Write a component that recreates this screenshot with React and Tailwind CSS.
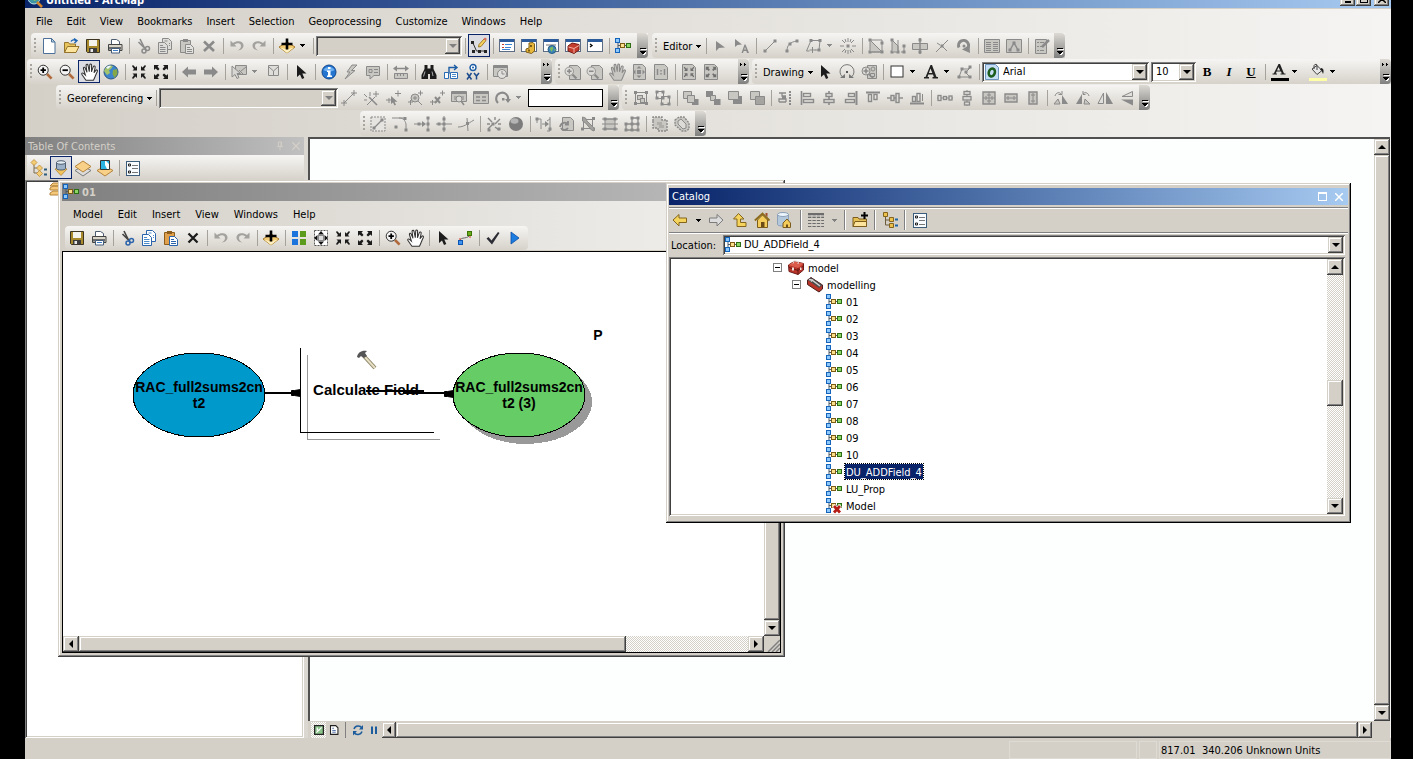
import React from 'react';

const G = '#8a8a8a';
const L = '#c9c7c2';

const S = ({ d, c = G, w = 1, f = 'none' }) => <path d={d} stroke={c} strokeWidth={w} fill={f} />;
const F = ({ d, c = G }) => <path d={d} fill={c} />;

const node = (
  <>
    <S d="M3 3v10M3 7.500h10" c="#4a5a6a" />
    <rect x="0.5" y="0.5" width="4" height="4" fill="#8cc8fc" stroke="#1464bc" />
    <rect x="0.5" y="10.5" width="4" height="4" fill="#8cc8fc" stroke="#1464bc" />
    <rect x="5.5" y="5.5" width="4" height="4" fill="#fce08c" stroke="#7c5c14" />
    <rect x="11.5" y="5.5" width="4" height="4" fill="#8cd464" stroke="#2c6c14" />
  </>
);
const hand = (
  <path
    transform="translate(-.8 -1) scale(1.150)"
    d="M5 15L1.500 10C.8 9 2 8.200 2.900 9L4.500 10.500L2.800 4.800C2.500 3.600 3.900 3.200 4.300 4.300L5.900 8L5.100 2.200C5 1 6.600.8 6.800 2L7.900 7.500L8.300 1.600C8.400.5 9.900.6 9.900 1.700L9.800 7.600L11.400 3.200C11.900 2.100 13.300 2.600 13 3.800L12 8.500L13.600 6.400C14.400 5.500 15.400 6.300 14.900 7.300C13.500 10 12.800 12.800 11.500 15Z"
    strokeWidth=".9"
  />
);
const lens = (sign, c1 = '#333', c2 = '#b06a3c', bg = '#f4f4f4') => (
  <>
    <S d="M10 10l4.6 4.6" c={c2} w={2.6} />
    <circle cx="6.2" cy="6.2" r="5" fill={bg} stroke={c1} />
    <S d={sign ? 'M3.5 6.2h5.4M6.2 3.5v5.4' : 'M3.5 6.2h5.4'} c={c1 === G ? G : '#000'} w={1.8} />
  </>
);
const shrink = (c) => (
  <F c={c} d="M1 2l1-1 2.5 2.5L6 2v4.5H1.5L3 5zM15 2l-1-1-2.5 2.5L10 2v4.5h4.5L13 5zM1 14l1 1 2.5-2.5L6 14V9.5H1.5L3 11zM15 14l-1 1-2.5-2.5L10 14V9.5h4.5L13 11z" />
);
const grow = (c) => (
  <F c={c} d="M1 1h5L4.500 2.500 6.500 5 5 6.500 2.500 4.500 1 6zM15 1h-5l1.500 1.500-2 2.500L11 6.500l2.500-2L15 6zM1 15h5l-1.500-1.500 2-2.500L5 9.500l-2.500 2L1 10zM15 15h-5l1.500-1.500-2-2.500L11 9.500l2.500 2L15 10z" />
);
const pointer = (c) => <F c={c} d="M4 1v12l3-2.600 2 4.600 2.300-1-2-4.500H13.500z" />;
const floppy = (
  <>
    <path d="M1.500 1.500h13v13h-12l-1-1z" fill="#a88a2c" stroke="#3c3420" />
    <rect x="4" y="2" width="8" height="6" fill="#f4f4ec" />
    <rect x="4" y="10" width="8" height="4.500" fill="#3c3c3c" />
    <rect x="5.500" y="11" width="2.500" height="3" fill="#e8e8e8" />
  </>
);
const printer = (
  <>
    <path d="M4.500 6.500v-5h5l3 2v3" fill="#fff" stroke="#4c5c70" />
    <path d="M1.500 6.500h13.500v6h-13.500z" fill="#d8d4c8" stroke="#444" />
    <path d="M2 9h12v2.500H2z" fill="#6c6c6c" />
    <path d="M4.500 10.500h8v4.500h-8z" fill="#fff" stroke="#445c7c" />
    <S d="M6 12.500h5" c="#3c7cc4" />
  </>
);
const scissors = (c, c2) => (
  <>
    <S d="M5 1l4.500 9M3.500 4L10 10.500" c={c2} w={1.600} />
    <circle cx="9" cy="13" r="2" fill="none" stroke={c} strokeWidth="1.500" />
    <circle cx="12.500" cy="10.500" r="2" fill="none" stroke={c} strokeWidth="1.500" />
  </>
);
const copyIcon = (c, bg, l) => (
  <>
    <path d="M5.500.5h6l3 3v8h-9z" fill={bg} stroke={c} />
    <path d="M1.500 4.500h6l3 3v8h-9z" fill={bg} stroke={c} />
    <S d="M3 7.500h3M3 9.500h5.500M3 11.500h5.500M3 13.500h5.500M7.500 3h3M12 5.500h1M12 7.500h1" c={l} />
  </>
);
const pasteIcon = (c, bg, l, b) => (
  <>
    <path d="M1.500 2.500h10v12h-10z" fill={b} stroke={c} />
    <path d="M4 1h5v3H4z" fill={c} />
    <path d="M6.500 6.500h5l3 3v6h-8z" fill={bg} stroke={l} />
    <S d="M8 9.500h3M8 11.500h5M8 13.500h5" c={l} />
  </>
);
const addData = (
  <>
    <path d="M8 4l8 5-8 6-8-6z" fill="#f4cc74" stroke="#a87c2c" />
    <path d="M1 9.500l7 2 7-2-7 5.500z" fill="#fff0c0" />
    <S d="M8 .5v11M2.500 6h11" c="#000" w={2.600} />
  </>
);
const win = (c = '#2c5c9c') => (
  <>
    <rect x="0.500" y="1.500" width="15" height="12" fill="#fff" stroke="#5c6c84" />
    <rect x="1" y="1" width="14" height="3" fill={c} />
  </>
);
const vtx = (pts, c = G) => pts.map(([x, y], i) => <rect key={i} x={x - 1.5} y={y - 1.5} width="3" height="3" fill={c} />);
const undo = <F c="#a4a29e" d="M1.500 2.500v6h6L5.500 6.500C8.500 4.500 12 5 12 8c0 2-1.500 3.500-3.500 4.500 4-.300 6-2.500 6-5 0-4.500-6.500-5.500-10.500-2.500z" />;
const redo = <F c="#a4a29e" d="M14.500 2.500v6h-6l2-2C7.500 4.500 4 5 4 8c0 2 1.500 3.500 3.500 4.500-4-.300-6-2.500-6-5 0-4.500 6.500-5.500 10.500-2.500z" />;
const list = (
  <>
    <rect x="1.500" y="1.500" width="13" height="14" fill="#f8fbff" stroke="#3c5c7c" />
    <S d="M7 5.500h6M7 8.500h6M7 12.500h6" c="#777" />
    <S d="M3.500 4h2v2h-2zM3.500 11h2v2h-2z" c="#222" />
  </>
);
const toolbox = (
  <>
    <path d="M.5 5L6 1.500l9.500 2V10L10 14.500 1 11.500z" fill="#b83428" stroke="#6c1c18" />
    <path d="M.5 5L10 8l5.500-4.500L6 1.500z" fill="#dc5c4c" />
    <S d="M10 8v6.500M1 7.500l9 3L15.500 6" c="#641812" />
    <path d="M5 3.500L6 .8l4.500.7-.5 2.500" fill="none" stroke="#e8d8d4" />
    <path d="M4 7.500h2v3H4zM12 7.500h1.500v2.500H12z" fill="#f0e0dc" />
  </>
);
const page = (extra) => (
  <>
    <path d="M4.500 1.500h8l3 3v11h-11z" fill={L} stroke={G} />
    {extra}
  </>
);

const icons = {
  node,
  floppy,
  printer,
  undo,
  redo,
  list,
  toolbox,
  addData,
  newDoc: (
    <>
      <path d="M2.500.5h8l3.500 3.500v11.500H2.500z" fill="#fff" stroke="#4c7098" />
      <path d="M10.500.5V4H14z" fill="#bcd4ec" stroke="#4c7098" />
    </>
  ),
  open: (
    <>
      <path d="M1.500 14.500v-10h4l1 1.500h6v8.500z" fill="#e8c45c" stroke="#94742c" />
      <path d="M1.500 14.500l3-6H16l-3 6z" fill="#fce49c" stroke="#94742c" />
      <S d="M8 3.500C9 1.500 11 1.500 13 2.500M11 .500l3 2-2.500 2.500" c="#1c64b4" w={1.400} />
    </>
  ),
  cutG: scissors(G, G),
  cut: scissors('#2c64ac', '#444'),
  copyG: copyIcon(G, '#dedcd8', G),
  copy: copyIcon('#2c64ac', '#fff', '#4c8ccc'),
  pasteG: pasteIcon(G, '#e4e2de', G, L),
  paste: pasteIcon('#8c5c1c', '#fff', '#2c64ac', '#e0a04c'),
  delG: <S d="M3 3.500l10 9.500M13 3.500L3 13" w={2.600} />,
  del: <S d="M3.500 3.500l9 9M12.500 3.500l-9 9" c="#1c1c1c" w={2.300} />,
  edit: (
    <>
      <S d="M1.500 4l4 9h9" c="#333" />
      <F c="#222" d="M0 3h3v3H0zM1 12h3v3H1zM7 12h3v3H7zM13 12h3v3h-3z" />
      <path d="M7.500 9l.5-2.500 5-5.500 2 1.500-5 6z" fill="#f4d45c" stroke="#a47c2c" />
      <path d="M12.500 1L14-.5l2 1.500-1.500 1.500z" fill="#dc6c5c" />
    </>
  ),
  winToc: (
    <>
      {win()}
      <S d="M3 6.500h2M3 9.500h2" c="#c43c2c" />
      <S d="M6 6.500h7M6 9.500h6M3 11.500h8" c="#3c84d4" />
    </>
  ),
  winCatalog: (
    <>
      {win()}
      <path d="M8 7.500V5l4-.5 1.500 1.500v7l-3 2.500-5.500-1.500v-3l3-1z" fill="#e8b83c" stroke="#7c5c14" />
      <path d="M9 7h2v2H9zM7 11.500h2v2H7z" fill="#7c5c14" />
    </>
  ),
  winSearch: (
    <>
      {win()}
      <path d="M3 6h10v2H3z" fill="#b8b8b8" />
      <circle cx="9" cy="11.500" r="4" fill="#3c84bc" stroke="#285c84" />
      <F c="#7cbc5c" d="M6.500 10l3-1.500 1 2-2 3.500zM11 11l2 .500-1 2z" />
    </>
  ),
  winTool: (
    <>
      {win()}
      <path d="M3 8l4-3 7 1.500V12l-5 3.500L3 13z" fill="#c43c2c" stroke="#741c14" />
      <S d="M3.500 9l5.500 1.500 5-3M9 10.500V15" c="#f0b0a4" />
    </>
  ),
  winPy: (
    <>
      {win()}
      <S d="M3 6l2 1.500L3 9" c="#000" w={1.300} />
    </>
  ),
  zoomIn: lens(true),
  zoomOut: lens(false),
  pan: <g fill="#fff" stroke="#333">{hand}</g>,
  panG: <g fill={L} stroke={G}>{hand}</g>,
  globe: (
    <>
      <circle cx="8" cy="8" r="7" fill="#3c84cc" stroke="#2c5484" />
      <path d="M2 5c2-4 6-4 8-3L8 5 6 6 7 9l-3 2-3-4z" fill="#a4c46c" />
      <path d="M10 6l4-1 .5 5-3 4-2-4z" fill="#84a848" />
      <path d="M3 3.500C5 1.500 7 1.500 8 2L5 5z" fill="#f0f8ff" />
    </>
  ),
  shrink: shrink('#1c1c1c'),
  grow: grow('#1c1c1c'),
  back: <F d="M1 8l6-5.500V5.500h8v5H7v3z" />,
  fwd: <F d="M15 8L9 2.500V5.500H1v5h8v3z" />,
  selFeat: (
    <>
      <path d="M4.500 1.500h11v9h-11z" fill={L} stroke={G} />
      <S d="M8 6l4 4M15 3l-5 4" />
      <path d="M1 2v11l3-2.500 2 4 2-1-2-4h3.500z" fill="#d8d6d2" stroke={G} />
    </>
  ),
  clearSel: (
    <>
      <path d="M3.500 1.500h10v10h-10z" fill="#e0deda" stroke={G} />
      <S d="M4 3l4.500 4M13 3L8.500 7v4" />
    </>
  ),
  pointer: pointer('#1c1c1c'),
  pointerG: <F d="M4 3v10l3-3 6-.500z" />,
  pointerA: (
    <>
      <F d="M1 1v8l2.500-2L8 6.500z" />
      <path d="M11.500 6.500l3.500 8.500h-2l-.7-2h-2.600l-.7 2H7.500l3-8.500zM11 9l-.8 2.500h1.700z" fill={G} />
    </>
  ),
  info: (
    <>
      <circle cx="8" cy="8" r="7" fill="#2474d0" stroke="#14488c" />
      <path d="M2.500 6c2-4 9-4 11 0-4 2-7 2-11 0z" fill="#6cb0f0" />
      <F c="#fff" d="M7 3h2.500v2H7zM6 6.500h3.500v5H11v1.500H6v-1.500h1V8H6z" />
    </>
  ),
  bolt: <path d="M9 1L4 8h3l-5 7 10-8.500H8.500L14 1z" fill={L} stroke={G} />,
  popup: (
    <>
      <path d="M1.500 2.500h13v9H9l-4 3.500v-3.500H1.500z" fill={L} stroke={G} />
      <S d="M4 5.500h3v3H4zM9 5.500h4M9 8.500h4" />
    </>
  ),
  measure: (
    <>
      <S d="M2 4.500h12" w={1.500} />
      <F d="M0 4.500L4 1.500v6zM16 4.500l-4-3v6z" />
      <path d="M1.500 9.500h13v5h-13z" fill={L} stroke={G} />
      <S d="M4.500 10v2M7.500 10v2M10.500 10v2" />
    </>
  ),
  find: (
    <>
      <path d="M3.500 1h3v3.500h3V1h3v4l3 6v4H9v-5H7v5H.500v-4l3-6z" fill="#1c1c1c" />
      <S d="M4 7.500l-1.500 5M11 7.500l1 4.500" c="#aaa" />
    </>
  ),
  route: (
    <>
      <S d="M2 13V9h4V3.500h7M11 1l3 2.500L11 6" c="#1c5ca4" w={1.400} />
      <path d="M1.500 8.500h4v6h-4zM7.500 8.500h7v6h-7z" fill="#fff" stroke="#2c6cb4" />
      <S d="M9 10.500h4M9 12.500h4" c="#4c8ccc" />
    </>
  ),
  goXY: (
    <>
      <circle cx="8" cy="3.500" r="3" fill="#fff" stroke="#1c5ca4" strokeWidth="1.400" />
      <circle cx="8" cy="3.500" r="1" fill="#1c5ca4" />
      <S d="M2 9l4.500 6.500M6.500 9L2 15.500M9 9l2.500 3L14 9M11.500 12v3.500" c="#1c4c8c" w={1.500} />
    </>
  ),
  time: (
    <>
      <path d="M.5 1.500h14v11H.5z" fill={L} stroke={G} />
      <F d="M1 2h13v2H1z" />
      <circle cx="9" cy="10" r="4.500" fill="#e2e0dc" stroke={G} />
      <S d="M9 7v3h2.500" />
    </>
  ),
  lzoomIn: page(<g transform="translate(-1 2) scale(.85)">{lens(true, G, G, '#dddbd7')}</g>),
  lzoomOut: page(<g transform="translate(-1 2) scale(.85)">{lens(false, G, G, '#dddbd7')}</g>),
  lfull: (
    <>
      <path d="M2.500.5h9l3 3v12h-12z" fill={L} stroke={G} />
      <F d="M8 2L5.500 4.500h5zM8 14l-2.500-2.500h5zM2 8l2.500-2.500v5zM14 8l-2.500-2.500v5z" />
      <rect x="6" y="6" width="4" height="4" fill={G} />
    </>
  ),
  l11: (
    <>
      <path d="M1.500.5h10l3 3v12h-13z" fill={L} stroke={G} />
      <S d="M4.500 5v6M11.500 5v6M8 6v1.500M8 9v1.500" w={1.500} />
    </>
  ),
  lshrink: (
    <>
      <path d="M1.500.5h10l3 3v12h-13z" fill={L} stroke={G} />
      <g transform="translate(2 2) scale(.75)">{shrink('#6e6e6e')}</g>
    </>
  ),
  lgrow: (
    <>
      <path d="M1.500.5h10l3 3v12h-13z" fill={L} stroke={G} />
      <g transform="translate(2 2) scale(.75)">{grow('#6e6e6e')}</g>
    </>
  ),
  line: <>{vtx([[3, 13], [13, 3]])}<S d="M3 13L13 3" /></>,
  arc: <>{vtx([[3, 13], [6, 6], [13, 3]])}<S d="M3 13C3 7 6 4 13 3" /></>,
  trace: <>{vtx([[5, 2.5], [14, 2.5], [13, 12]])}<S d="M.5 13L5 2.500h9L13 12H9M6.500 9v6M3.500 12h6M.5 13h3" /></>,
  point: (
    <>
      <path d="M8 0v4M8 12v4M0 8h4M12 8h4M2 2l3 3M14 2l-3 3M2 14l3-3M14 14l-3-3M5 1l1 3M11 1l-1 3M5 15l1-3M11 15l-1-3" stroke={G} />
      <rect x="6.500" y="6.500" width="3" height="3" fill={G} />
    </>
  ),
  reshapeA: <>{vtx([[2, 2], [2, 14], [14, 14], [14, 5]])}<path d="M2 14V2l12 12z" fill={L} stroke={G} /><S d="M2 2h12v3" /><S d="M14 5v9H2" /></>,
  reshapeB: <>{vtx([[2, 2], [2, 14], [8, 14], [14, 8], [14, 14]])}<S d="M2 14V2l6 6v6z" f={L} /><S d="M8 2v12M14 8v6h-3" /></>,
  split: <><path d="M.5 5.500h15v6H.5z" fill={L} stroke={G} /><S d="M8 0v16" w={1.500} />{vtx([[8, 2], [8, 14]])}</>,
  cross: <><S d="M2 14L14 2M3 5l3 2M9 9l4 4" />{vtx([[8, 8]])}</>,
  rotate: <><S d="M3 9.500A5 5 0 1 1 11 11" w={3} /><F d="M6 11.500l8 3.500-.5-8z" /><circle cx="8" cy="8" r="1.500" fill={G} /></>,
  attrs: <><path d="M.5 1.500h15v13H.5z" fill={L} stroke={G} /><S d="M2 4.500h5M9 4.500h5M2 6.500h5M9 6.500h5M2 8.500h5M9 8.500h5M2 10.500h5M9 10.500h5M2 12.500h5M9 12.500h5" /></>,
  sketchP: <><path d="M.5 1.500h15v13H.5z" fill={L} stroke={G} /><S d="M4 12l4-7 4 7" w={1.400} />{vtx([[4, 12], [8, 5], [12, 12]])}</>,
  create: <><path d="M1.500 1.500h11v14h-11z" fill={L} stroke={G} /><S d="M3 4.500h2M6 4.500h4M3 8.500h2M6 8.500h4M3 12.500h2M6 12.500h4" /><S d="M8 9l7-7" w={2.500} /></>,
  rotArc: <><S d="M3.500 13A7 7 0 1 1 12.500 13" c="#777" /><F c="#777" d="M1 14h5v-4zM15 14h-5v-4z" /><rect x="7" y="7" width="2" height="2" fill="#555" /></>,
  zoomSel: <><path d="M6.500 1.500h9v13h-9z" fill={L} stroke={G} /><circle cx="12" cy="5" r="2" fill="none" stroke={G} /><path d="M9.500 9.500h4v3h-4z" fill="none" stroke={G} /><circle cx="5" cy="7" r="4" fill="#dcdad6" stroke={G} /><S d="M2.500 7h5M5 4.500v5M7.500 10l5 4.500" w={1.600} /></>,
  rect: <rect x="2" y="2" width="12" height="11" fill="#fff" stroke="#333" />,
  bigA: <path d="M7.500 1h1.500l4.500 12h1.500v1.500H9.500V13h1.300l-.8-2.500H5.300L4.500 13H6v1.500H1V13h1.500zM7.500 4.500L5.900 9h3.400z" fill="#222" />,
  fontA: <path d="M7.500 0h1.500l4 9.500h1.500v1H9.500v-1h1.300l-.8-2H5.600l-.8 2H6v1H1.500v-1h1.300zM7.500 3L6 6.500h3.200z" fill="#222" />,
  bucket: <><path d="M3 5l5-3.500 5 5-5 4z" fill="#e8e8e8" stroke="#444" /><S d="M8 6V1c0-1-3-1-3 1v3" c="#444" /><F c="#222" d="M12 4c3 0 3 4 2 6-1-2-1-4-3-4z" /></>,
  editVert: <><S d="M2 13l3-8h6l3-2.500M2 13h11L8.500 8.500 13 4" />{vtx([[2, 13], [5, 5], [13, 3], [13, 13], [9, 8]])}</>,
  gcp: <><S d="M3 13L13 3M0 13h6M3 10v6M10 3h6M13 0v6" /></>,
  gcpWand: <><S d="M1 4l3 3M7 2v4M1 10h3M4 15l8-8M10 4h6M13 1v6M11 12l3 3" /><S d="M6 7l8 8" w={1.600} /></>,
  gcpSel: <><F d="M6 6v8l2-1.500 1.500 3 1.500-.7-1.500-3h3z" /><S d="M10 3.500h6M13 .500v6M1 10h6M4 8v5" /></>,
  gcpZoom: <><circle cx="8" cy="8" r="4" fill={L} stroke={G} /><S d="M6 8h4M8 6v4M11 11l4 4M11 3h5M13.500.500v5M1 12h5M3.500 10v5" /></>,
  gcpDel: <><S d="M11 3h5M13.500.500v5M1 12h5M3.500 10v5" /><S d="M6 7l5 6M11 7l-5 6" w={2} /></>,
  linkTbl: <><path d="M.5 1.500h15v10H.5z" fill={L} stroke={G} /><F d="M1 2h14v2H1z" /><S d="M3 7h3M10 7h3M3 9h2M11 9h2" /><circle cx="8" cy="9" r="3" fill="#dddbd7" stroke={G} /><S d="M10 11l3 4" w={1.600} /></>,
  tbl: <><path d="M.5 1.500h15v12H.5z" fill={L} stroke={G} /><F d="M1 2h14v2H1z" /><S d="M3 7h4M9 7h4M3 10.500h4M9 10.500h4" w={1.500} /></>,
  rotTool: <><S d="M3 13A6 6 0 1 1 13 10" w={2} /><F d="M10 9h6l-3 4z" /><rect x="7" y="8" width="2.500" height="2.500" fill={G} /></>,
  group: <><S d="M2.500 2.500h11v11h-11z" /><rect x="4.500" y="5.500" width="5" height="4" fill={L} stroke={G} /><rect x="7.500" y="8.500" width="4" height="4" fill={L} stroke={G} />{vtx([[2.5, 2.5], [13.5, 2.5], [2.5, 13.5], [13.5, 13.5]])}</>,
  ungroup: <><S d="M1.500 1.500h7v7h-7zM6.500 6.500h8v8h-8z" />{vtx([[2, 2], [8, 2], [2, 8], [8, 8], [14, 7], [7, 14], [14, 14]])}</>,
  front: <><path d="M.5 1.500h8v7h-8z" fill={L} stroke={G} /><rect x="9" y="9" width="6.500" height="6" fill={G} /><S d="M4.500 5.500h7v7h-7z" f={L} /></>,
  back1: <><rect x="1" y="1" width="7" height="6" fill={G} /><path d="M5.500 5.500h5v5h-5z" fill={L} stroke={G} /><rect x="9" y="9" width="6.500" height="6" fill={G} /></>,
  fwd1: <><rect x="6" y="6" width="9" height="8" fill={G} /><path d="M1.500 1.500h10v8h-10z" fill={L} stroke={G} /></>,
  back2: <><path d="M1.500 1.500h9v8h-9z" fill={L} stroke={G} /><path d="M6.500 6.500h9v8h-9z" fill="#a6a4a0" stroke={G} /></>,
  alM: <><S d="M2 3h7M5 3v3h4M5 7.500h4M2 12h7M2 12v-3h7v3" w={1.300} /><path d="M13 1v14" stroke={G} strokeWidth="2" strokeDasharray="2 1" /></>,
  alL: <><S d="M2.500 1v14" w={1.600} /><rect x="4.500" y="3.500" width="7" height="3" fill="none" stroke={G} strokeWidth="1.400" /><rect x="4.500" y="9.500" width="10" height="3" fill="none" stroke={G} strokeWidth="1.400" /></>,
  alC: <><S d="M8 1v14" w={1.600} /><rect x="5" y="3.500" width="6" height="3" fill="#dddbd7" stroke={G} strokeWidth="1.400" /><rect x="3" y="9.500" width="10" height="3" fill="#dddbd7" stroke={G} strokeWidth="1.400" /></>,
  alR: <><S d="M13.500 1v14" w={2} /><rect x="5.500" y="3.500" width="6" height="3" fill="none" stroke={G} strokeWidth="1.400" /><rect x="2.500" y="9.500" width="9" height="3" fill="none" stroke={G} strokeWidth="1.400" /></>,
  alT: <><S d="M1 2.500h14" w={2} /><rect x="3.500" y="4.500" width="3" height="7" fill="none" stroke={G} strokeWidth="1.400" /><rect x="9" y="4.500" width="3" height="5" fill="none" stroke={G} strokeWidth="1.400" /></>,
  alV: <><S d="M0 8h16" w={1.400} /><rect x="4" y="5.500" width="3" height="5" fill="#dddbd7" stroke={G} strokeWidth="1.400" /><rect x="9" y="3.500" width="3" height="9" fill="#dddbd7" stroke={G} strokeWidth="1.400" /></>,
  alB: <><S d="M1 13.500h14" w={2} /><rect x="3.500" y="6.500" width="3" height="5" fill="none" stroke={G} strokeWidth="1.400" /><rect x="8" y="3.500" width="3" height="8" fill="none" stroke={G} strokeWidth="1.400" /><S d="M13.500 4v7" /></>,
  dH: <><S d="M0 8h16" /><rect x="1" y="5.500" width="3" height="5" fill="#dddbd7" stroke={G} strokeWidth="1.300" /><rect x="6.500" y="6.500" width="3" height="3" fill="#dddbd7" stroke={G} strokeWidth="1.300" /><rect x="12" y="6" width="3" height="4" fill="#dddbd7" stroke={G} strokeWidth="1.300" /></>,
  dV: <><S d="M8 0v16" /><rect x="5" y="1.500" width="6" height="3" fill="#dddbd7" stroke={G} strokeWidth="1.300" /><rect x="4" y="6.500" width="8" height="3.500" fill="#dddbd7" stroke={G} strokeWidth="1.300" /><rect x="5.500" y="12" width="5" height="3" fill="#dddbd7" stroke={G} strokeWidth="1.300" /></>,
  same: <><path d="M2 2h12v12H2z" fill={L} stroke={G} strokeWidth="1.400" /><S d="M8 2v12M2 8h12M5 6v4M11 6v4M6 5h4M6 11h4" /></>,
  sameW: <><path d="M2 4h12v8H2z" fill={L} stroke={G} strokeWidth="1.400" /><S d="M3 8h10M5 6v4M11 6v4" /></>,
  sameH: <><path d="M4 2h8v12H4z" fill={L} stroke={G} strokeWidth="1.400" /><S d="M8 3v10M6 5h4M6 11h4" /></>,
  rotR: <><F d="M9 5l6 9H9z" /><path d="M7 14H1l4-5z" fill={L} stroke={G} /><S d="M2 6c1-4 5-4 6-2M5.500 4.500H9V1" /></>,
  rotL: <><F d="M7 4v10H1z" /><path d="M9 14h6l-5-5z" fill={L} stroke={G} /><S d="M14 6c-1-4-5-4-6-2M10.500 4.500H8V1" /></>,
  flipH: <><path d="M6.500 3v10.500H1z" fill="#e2e0dc" stroke={G} /><F d="M9 2l7 12H9z" /></>,
  flipV: <><path d="M13.500 1.500v5H3z" fill="#e2e0dc" stroke={G} /><F d="M2 9.500h12v6z" /></>,
  e1: <><rect x="1" y="1" width="14" height="14" fill="#e6e4e0" stroke={G} strokeDasharray="2 1" /><S d="M4 12l8-8" w={1.300} />{vtx([[4, 12], [12, 4]])}</>,
  e2: <><S d="M0 2h7c4 0 6 2 7 6v6" />{vtx([[13, 2.500], [14, 14], [4, 11]])}<S d="M7 2h6" /></>,
  e3: <><S d="M0 8h10M14 1v14" />{vtx([[5, 8], [14, 8], [14, 2], [14, 14]])}<F d="M8 5l4 3-4 3z" /></>,
  e4: <><S d="M0 8h16M8 0v16" />{vtx([[3, 8], [8, 8], [8, 3], [8, 13]])}</>,
  e5: <><S d="M0 11c6 0 9-3 16-7M9 2l1 13" />{vtx([[9.5, 7.5]])}</>,
  e6: <><S d="M2 2l4 4M14 3l-5 5M2 13l4-4M9 1v3M1 8h3M12 8h3M9 11l4 3" w={1.400} />{vtx([[7, 8], [3, 14], [13, 13]])}</>,
  ball: <><circle cx="8" cy="8" r="7" fill="#7c7c7c" /><ellipse cx="6.500" cy="5" rx="4" ry="2.800" fill="#b4b4b4" /></>,
  t1: <><S d="M1 3h4v10M1 3v4M6 8h6M14 1v14h-3M14 3l-3 2" />{vtx([[1, 3], [14, 13]])}<F d="M9 5l4 3-4 3z" /></>,
  t2: <><path d="M4.500 1.500h8l3 3v10h-11z" fill={L} stroke={G} /><S d="M2 11c1-5 6-5 8-3M10 5v3.500H7M10 12c-2 3-6 2-7 0" w={1.800} /></>,
  t3: <><path d="M3.500 3.500h9v9h-9z" fill="none" stroke={G} />{vtx([[13.500, 2.500], [2.500, 13], [13.500, 13]])}<path d="M2.500 1v4l3 2 6 7 2.500 1v-3l-7-7-1.500-3z" fill="#a4a29e" stroke={G} /></>,
  t4: <><path d="M3 3h10v10H3z" fill={L} stroke={G} /><S d="M0 3h16M0 8h16M0 13h16" />{vtx([[3, 3], [13, 3], [3, 13], [13, 13]])}</>,
  t5: <><S d="M8 2h6v12H2V8h12M8 2v12" w={1.300} />{vtx([[8, 2], [14, 2], [2, 8], [2, 14], [8, 14], [14, 14], [14, 8], [8, 8]])}</>,
  u1: <><path d="M1 5V1h9v3h5v11H6v-3H1z" fill={L} stroke={G} strokeDasharray="2 1" strokeWidth="1.400" /><path d="M5 6h5v3h2v3H7V9H5z" fill="#b0aea9" /></>,
  u2: <><path d="M1 4l4-3h5l5 6v6l-3 2H8L1 9z" fill={L} stroke={G} strokeDasharray="2 1" strokeWidth="1.400" /><path d="M4 5l3-2 5 5v4l-3 1-5-5z" fill="#dddbd7" stroke={G} /></>,
  tocList: <><S d="M3 4v9h4M3 8h4" c="#7c6c54" /><path d="M3-.5l3 3-3 3-3-3zM8.500 5l3 3-3 3-3-3zM8.500 10.500l3 3-3 3-3-3z" fill="#f4cc74" stroke="#b4842c" strokeWidth=".7" /><S d="M13 9.500h3M13 14.500h3" c="#2c5c7c" w={1.800} /></>,
  tocSrc: <><path d="M2 9l6-2.500L14 9l-6 6.500z" fill="#f4c45c" stroke="#a8782c" strokeWidth=".7" /><path d="M3.500 2.500v6c0 2 9 2 9 0v-6z" fill="#9cb0c8" stroke="#4c5c70" /><ellipse cx="8" cy="2.500" rx="4.500" ry="1.800" fill="#e4ecf4" stroke="#4c5c70" /></>,
  tocVis: <><path d="M8 6l8 4.500L8 16 0 10.500z" fill="#dcdcdc" stroke="#7c7c7c" /><path d="M8 1l8 5.500L8 12 0 6.500z" fill="#f8d088" stroke="#b4843c" /></>,
  tocSel: <><path d="M8 6l8 4.500L8 16 0 10.500z" fill="#f8d088" stroke="#b4843c" /><path d="M3.500.5h9v9h-9z" fill="#fff" stroke="#333" /><path d="M4 1h4v4l2 4H4zM9 1h3v3z" fill="#2cb4e4" /></>,
  overview: <g shapeRendering="crispEdges"><rect x="1" y="1" width="6" height="6" fill="#1c74dc" /><rect x="9" y="1" width="6" height="6" fill="#5c9c1c" /><rect x="1" y="9" width="6" height="6" fill="#1c74dc" /><rect x="9" y="9" width="6" height="6" fill="#5c9c1c" /></g>,
  fullExt: <><path d="M1.500.5h13v15h-13z" fill="#fff" stroke="#555" strokeDasharray="2 1" /><F c="#111" d="M8 1L5 4.500h6zM8 15l-3-3.500h6zM1 8l3.500-3v6zM15 8l-3.500-3v6z" /><rect x="5.500" y="5.500" width="5" height="5" fill="#ddd" stroke="#888" /></>,
  connect: <><S d="M3 11c0-5 9-1 10-7" c="#666" /><rect x="1.500" y="10.500" width="4" height="4" fill="#3c94f0" stroke="#0c54b4" /><rect x="10.500" y="1.500" width="4" height="4" fill="#6cac1c" stroke="#3c7404" /><S d="M3 10V8M13 6v2" c="#d43c2c" /></>,
  check: <F c="#2c2c34" d="M1.500 8.500l2-1.500 3 3.500L13 2l1.500 1L7 14.500z" />,
  run: <path d="M4 2v12l8-6z" fill="#1c7ce0" stroke="#0c4ca4" strokeWidth=".8" />,
  cback: <path d="M1 8l6-5.500v3.500h7.500v4.500H7V14z" fill="#f4d45c" stroke="#84641c" />,
  cfwd: <path d="M15 8L9 2.500v3.500H1.500v4.500H9V14z" fill="#dcdcdc" stroke="#7c7c7c" />,
  cup: <path d="M6.500 1.500L1.500 7H5v7.500h9v-4H8.500V7H12z" fill="#f4d45c" stroke="#84641c" />,
  chome: <><path d="M3.500 8v7.500h10V8l-5-5z" fill="#f4cc5c" stroke="#7c5c1c" /><S d="M.8 8.500L8.500 1.500l7 7" c="#8c6c1c" w={1.800} /><F c="#6c4c14" d="M7 10h3.500v5H7z" /><path d="M11.500 1h2v4l-2-2z" fill="#9c4c2c" /></>,
  cdb: <><path d="M1.500 2.500v10c0 2 11 2 11 0v-10z" fill="#b4c8dc" stroke="#8ca0b8" /><ellipse cx="7" cy="2.500" rx="5.500" ry="2" fill="#ecf4fc" stroke="#8ca0b8" /><path d="M7 11v4.500h7.500V11L11 7z" fill="#f4cc5c" stroke="#7c5c1c" /><F c="#6c4c14" d="M10 12.500h2v3h-2z" /></>,
  cgrid: <><path d="M0 1h16v2H0z" fill="#6c6c6c" /><path d="M0 5.500h16M0 8.500h16M0 11.500h16M0 14.500h16" stroke="#6c6c6c" strokeDasharray="3.400 1" /><path d="M0 4h16" stroke="#8c8c8c" strokeDasharray="3.400 1" /></>,
  cfolder: <><path d="M1 14.500v-9h5l1 1.500h7.500v7.500z" fill="#e4c054" stroke="#7c5c1c" /><path d="M1 14.500l2-5h11.500v5z" fill="#fce49c" stroke="#7c5c1c" /><S d="M12.500 0v7M9 3.500h7" c="#000" w={2} /></>,
  ctree: <><S d="M3.500 4v9h5M3.500 8h5" c="#6c5c3c" /><path d="M1.500.5h4v4h-4zM7.500 5.500h4v4h-4zM7.500 11.500h4v4h-4z" fill="#ecc04c" stroke="#84641c" /><S d="M13 7.500h3M13 13.500h3" c="#1c64a4" w={1.800} /></>,
  toolset: <><path d="M.5 3L4 .5 15.500 8v4L12 15 .5 7.500z" fill="#b83428" stroke="#4c1c18" /><path d="M.5 3L4 .5 15.500 8 12 11z" fill="#4c4c4c" /><S d="M2 2.500l3 .500 8 6M6 2.500l-2 2" c="#d4d4d4" w={1.500} /></>,
  badModel: <>{node}<S d="M7.500 7.500l7 7M14.500 7.500l-7 7" c="#fff" w={4} /><S d="M8 8l6 6.500M14 8l-6 6.500" c="#b41c14" w={2.800} /></>,
  fontO: <><path d="M1.500.5h10l3 3v12h-13z" fill="#c4dcf4" stroke="#6c94bc" /><ellipse cx="8" cy="8.500" rx="3" ry="4" fill="none" stroke="#1c5c1c" strokeWidth="2.500" transform="rotate(20 8 8)" /></>,
  pin: <S d="M5.500 1.500h5v7h-5zM3 9h10M8 9v6M9.500 2v6" c="#d4d0c8" w={1.300} />,
  close: <S d="M2 2l12 12M14 2L2 14" c="#d4d0c8" w={1.800} />,
  stack: <g><path d="M4 1h10v3H1zM1 6l3-2h10v4H1zM1 11l3-2h10v4H1z" fill="#f4c878" stroke="#b4843c" /></g>,
  mapView: <><rect x="3" y="3" width="10" height="10" fill="#8cc48c" stroke="#222" strokeWidth="1.400" /><S d="M5 11l6-6M6 5v3h3" c="#fff" w={1.300} /></>,
  layView: <><path d="M4 3h6l2.500 2.500V13H4z" fill="#fff" stroke="#222" strokeWidth="1.200" /><S d="M6 6h2M6 8.500h4M6 10.500h4" c="#3c5c9c" /></>,
  refresh: <><S d="M4 7a4.500 4.500 0 0 1 8-1M12 9.500a4.500 4.500 0 0 1-8 1" c="#1c5c9c" w={1.500} /><F c="#1c5c9c" d="M13 3v4.500H9zM3 13.500V9h4z" /></>,
  pause: <F c="#1c5c9c" d="M5 4.500h2v7.500H5zM9 4.500h2v7.500H9z" />,
  arcmap: <><circle cx="7" cy="6" r="6" fill="#3c94a4" stroke="#bfe4ec" /><path d="M4 3l4 1 2 4-3 1z" fill="#8cc45c" /><S d="M10 10l5 5" c="#d4842c" w={2.600} /></>,
};

const Icon = ({ n, className = 'size-4' }) => (
  <svg viewBox="0 0 16 16" className={`${className} shrink-0 overflow-visible`} aria-hidden="true">
    {icons[n]}
  </svg>
);

const raised =
  'bg-[#d4d0c8] shadow-[inset_-1px_-1px_#404040,inset_1px_1px_#d4d0c8,inset_-2px_-2px_#808080,inset_2px_2px_#fff]';
const sunken =
  'shadow-[inset_1px_1px_#808080,inset_-1px_-1px_#fff,inset_2px_2px_#404040,inset_-2px_-2px_#d4d0c8]';
const track = 'bg-[repeating-conic-gradient(#d4d0c8_0_25%,#ffffff_0_50%)] bg-[length:2px_2px]';
const barFill = 'bg-linear-to-b from-[#f6f5f3] to-[#d6d2ca]';

const Caret = ({ c = '#000' }) => (
  <svg viewBox="0 0 5 3" className="h-[3px] w-[5px] shrink-0" shapeRendering="crispEdges" aria-hidden="true">
    <path d="M0 0h5v1H0zM1 1h3v1H1zM2 2h1v1H2z" fill={c} />
  </svg>
);

const tri = { up: 'M4 2l4 4H0z', down: 'M0 2h8L4 6z', left: 'M6 0v8L2 4z', right: 'M2 0v8l4-4z' };
const Tri = ({ dir, c = '#000' }) => (
  <svg viewBox="0 0 8 8" className="size-2" aria-hidden="true">
    <path d={tri[dir]} fill={c} />
  </svg>
);
const ScrollBtn = ({ dir, className = 'size-4' }) => (
  <button aria-label={`Scroll ${dir}`} className={`${raised} ${className} flex shrink-0 items-center justify-center`}>
    <Tri dir={dir} />
  </button>
);

const Sep = () => (
  <span className="flex w-[6px] shrink-0 justify-center">
    <span className="h-4 w-px bg-[#a5a29b]" />
  </span>
);
const Grip = () => (
  <span className="flex w-[7px] shrink-0 justify-center">
    <span className="h-4 w-[2px] bg-[repeating-linear-gradient(#a8a59e_0_2px,transparent_2px_4px)]" />
  </span>
);
const Btn = ({ n, on }) => (
  <button
    aria-label={n}
    className={`flex h-[23px] w-[22px] shrink-0 items-center justify-center ${on ? 'border border-[#0a246a] bg-[#dcdde2]' : ''}`}
  >
    <Icon n={n} />
  </button>
);
const Drop = ({ n, c, line }) => (
  <button aria-label={n} className="flex w-[34px] shrink-0 items-center gap-[5px] pl-[3px]">
    <span className="relative flex">
      <Icon n={n} />
      {line && <span className={`absolute -bottom-px left-0 h-[3px] w-[18px] ${line}`} />}
    </span>
    <Caret c={c} />
  </button>
);
const Bar = ({ children, className = '', end = true, dots = false }) => (
  <div className={`flex h-[25px] shrink-0 items-center rounded-l-sm ${barFill} ${className}`}>
    <Grip />
    {children}
    {end && (
      <button
        aria-label="Toolbar options"
        className="ml-auto flex h-full w-[11px] shrink-0 flex-col items-center justify-end rounded-r-sm bg-linear-to-b from-[#dddad4] to-[#808080] pb-[3px]"
      >
        <svg viewBox="0 0 9 18" className="h-[18px] w-[9px]" shapeRendering="crispEdges" aria-hidden="true">
          {dots && <path d="M1 0h1v1h1v1H2v1H1zM5 0h1v1h1v1H6v1H5z" fill="#000" />}
          <path d="M3 12h6v1H3zM3 15h5v1H3zM4 16h4v1H4zM5 17h2v1H5z" fill="#fff" />
          <path d="M2 11h6v1H2zM2 14h6v1H2zM3 15h4v1H3zM4 16h2v1H4z" fill="#000" />
        </svg>
      </button>
    )}
  </div>
);
const Items = ({ list: names }) =>
  names.split(' ').map((n, i) => {
    if (n === '|') return <Sep key={i} />;
    if (n.startsWith('*')) return <Btn key={i} n={n.slice(1)} on />;
    if (n.startsWith('+')) return <Drop key={i} n={n.slice(1)} />;
    if (n.startsWith('-')) return <Drop key={i} n={n.slice(1)} c={G} />;
    return <Btn key={i} n={n} />;
  });
const TextDrop = ({ children, className }) => (
  <button className={`flex shrink-0 items-center gap-1 pt-[2px] whitespace-nowrap ${className}`}>
    {children} <Caret />
  </button>
);
const Combo = ({ label, value = '', icon, disabled, className }) => (
  <div className={`flex h-5 shrink-0 items-stretch p-[2px] ${sunken} ${disabled ? 'bg-[#d4d0c8]' : 'bg-white'} ${className}`}>
    {icon && (
      <span className="flex items-center">
        <Icon n={icon} />
      </span>
    )}
    <select aria-label={label} disabled={disabled} className="min-w-0 flex-1 appearance-none bg-transparent pl-[3px] text-black outline-none">
      <option>{value}</option>
    </select>
    <span className={`pointer-events-none flex w-[15px] items-center justify-center ${raised}`}>
      <Tri dir="down" c={disabled ? '#808080' : '#000'} />
    </span>
  </div>
);
const Menu = ({ items, className }) => (
  <nav className={`flex items-center pt-[2px] ${className}`}>
    {items.map((t) => (
      <button key={t}>{t}</button>
    ))}
  </nav>
);

function Toolbars() {
  return (
    <div className="flex flex-col gap-px pb-px">
      <div className="flex gap-1 pl-[6px]">
        <Bar className="w-[617px]">
          <Items list="newDoc open floppy printer | cutG copyG pasteG delG | undo redo | +addData |" />
          <Combo label="Map scale" disabled className="w-[146px]" />
          <Items list="| *edit | winToc winCatalog winSearch winTool winPy | node" />
        </Bar>
        <Bar className="w-[413px]">
          <TextDrop className="w-[44px] pl-1">Editor</TextDrop>
          <Items list="| pointerG pointerA | line arc -trace point | reshapeA reshapeB split cross rotate | attrs sketchP | create" />
        </Bar>
      </div>
      <div className="flex gap-[3px] pl-[2px]">
        <Bar dots className="w-[525px]">
          <Items list="zoomIn zoomOut *pan globe | shrink grow | back fwd | -selFeat clearSel | pointer | info bolt popup | measure | find route goXY | time" />
        </Bar>
        <Bar dots className="w-[194px]">
          <Items list="lzoomIn lzoomOut panG lfull l11 | lshrink lgrow" />
        </Bar>
        <Bar dots className="min-w-0 flex-1">
          <TextDrop className="w-[55px] pl-1">Drawing</TextDrop>
          <Items list="pointer rotArc zoomSel | +rect +bigA editVert |" />
          <Combo label="Font" value="Arial" icon="fontO" className="w-[167px]" />
          <Combo label="Font size" value="10" className="ml-[2px] w-[45px]" />
          <button className="w-[22px] font-['Liberation_Serif',serif] text-[13px] font-bold">B</button>
          <button className="w-[22px] font-['Liberation_Serif',serif] text-[13px] font-bold italic">I</button>
          <button className="w-[22px] font-['Liberation_Serif',serif] text-[13px] font-bold underline">U</button>
          <Sep />
          <Drop n="fontA" line="bg-black" />
          <span className="w-1" />
          <Drop n="bucket" line="bg-[#ffffa8]" />
        </Bar>
      </div>
      <div className="flex gap-[3px] pl-[31px]">
        <Bar className="w-[563px]">
          <TextDrop className="w-[90px] pl-1">Georeferencing</TextDrop>
          <Sep />
          <Combo label="Georeferenced layer" disabled className="w-[179px]" />
          <Items list="gcp gcpWand gcpSel gcpZoom gcpDel linkTbl tbl -rotTool" />
          <input aria-label="Rotation" className="ml-[2px] h-[18px] w-[75px] border border-black bg-white px-1" />
        </Bar>
        <Bar className="w-[528px]">
          <span className="w-px" />
          <Items list="group ungroup | front back1 fwd1 back2 | alM alL alC alR alT alV alB | dH dV same sameW sameH | rotR rotL flipH flipV" />
        </Bar>
      </div>
      <div className="flex pl-[335px]">
        <Bar className="w-[346px]">
          <Items list="e1 e2 e3 e4 e5 | e6 ball | t1 t2 t3 t4 t5 | u1 u2" />
        </Bar>
      </div>
    </div>
  );
}

function Contents() {
  return (
    <aside className="flex w-[279px] shrink-0 flex-col">
      <header className="flex h-[18px] items-center bg-linear-to-r from-[#808080] to-[#c0c0c0] pr-[3px] pl-[3px] text-[#d4d0c8]">
        <h2 className="flex-1 pt-[2px]">Table Of Contents</h2>
        <button aria-label="Pin" className="w-4"><Icon n="pin" className="size-2.5" /></button>
        <button aria-label="Close" className="w-2.5"><Icon n="close" className="size-2.5" /></button>
      </header>
      <div className={`ml-[2px] flex h-[25px] items-center pl-px ${barFill}`}>
        <Items list="tocList *tocSrc tocVis tocSel | list" />
      </div>
      <div className={`flex-1 bg-white p-[2px] ${sunken}`}>
        <div className="pl-[22px]"><Icon n="stack" /></div>
      </div>
    </aside>
  );
}

function MapView() {
  return (
    <main className="ml-1 flex min-w-0 flex-1 flex-col pr-px">
      <div className="flex min-h-0 flex-1">
        <div className="flex-1 border-t-2 border-l-2 border-[#505050] bg-[#fdfefe]" />
        <div className={`flex w-4 flex-col border-t-2 border-[#505050] ${track}`}>
          <ScrollBtn dir="up" />
          <div className={`flex-1 ${raised}`} />
          <ScrollBtn dir="down" />
        </div>
      </div>
      <div className="flex h-[17px] items-center border-t border-[#d4d0c8] bg-[#d4d0c8] pr-[18px]">
        <button aria-label="Data view" className={`ml-[3px] flex h-4 w-[15px] items-center justify-center ${track}`}><Icon n="mapView" className="size-3.5" /></button>
        <button aria-label="Layout view" className="flex h-4 w-[15px] items-center justify-center"><Icon n="layView" className="size-3.5" /></button>
        <span className="mx-1 h-full w-px bg-[#808080]" />
        <button aria-label="Refresh" className="flex size-4 items-center justify-center"><Icon n="refresh" /></button>
        <button aria-label="Pause drawing" className="flex size-4 items-center justify-center"><Icon n="pause" /></button>
        <ScrollBtn dir="left" className="h-4 w-[14px]" />
        <div className={`h-4 flex-1 ${raised}`} />
        <ScrollBtn dir="right" className="h-4 w-[14px]" />
      </div>
    </main>
  );
}

function Diagram() {
  return (
    <svg viewBox="0 0 560 220" className="h-[220px] w-[560px]" role="img" aria-label="Calculate Field model">
      <g shapeRendering="crispEdges">
        <ellipse cx="463" cy="150" rx="66" ry="42" fill="#999" />
        <ellipse cx="136" cy="143" rx="66" ry="42" fill="#0099cc" stroke="#000" />
        <ellipse cx="456" cy="143" rx="66" ry="42" fill="#66cc66" stroke="#000" />
        <path d="M244.500 103v84h132" fill="none" stroke="#999" />
        <path d="M237.500 96v84h133" fill="none" stroke="#000" />
        <path d="M202 141h29M340 141h45" stroke="#000" strokeWidth="2" />
        <path d="M303 139h58" stroke="#000" strokeWidth="2" />
      </g>
      <path d="M228.500 138.500h3l6-1v7l-6-1h-3zM381.500 139.500h3l6-1v7l-6-1h-3z" stroke="#000" strokeWidth="1" />
      <path d="M300 103l12 13" stroke="#8c8468" strokeWidth="4" />
      <path d="M301 104l11 12" stroke="#e8e0c4" strokeWidth="2" />
      <path d="M294 105c1-5 5-7 10-6l-2 2 2 3-3 2-3-2-2 2z" fill="#555" />
      <g fontFamily="Liberation Sans, sans-serif" fontWeight="bold" fontSize="14" textAnchor="middle">
        <text x="136" y="140">RAC_full2sums2cn</text>
        <text x="136" y="156">t2</text>
        <text x="456" y="140">RAC_full2sums2cn</text>
        <text x="456" y="156">t2 (3)</text>
        <text x="303" y="143" fontSize="15">Calculate Field</text>
        <text x="535" y="88">P</text>
      </g>
    </svg>
  );
}

function ModelWindow() {
  return (
    <section className="absolute top-[180px] left-[58px] flex h-[477px] w-[727px] flex-col bg-[#d4d0c8] p-[4px] pt-[3px] shadow-[inset_-1px_-1px_#404040,inset_1px_1px_#d4d0c8,inset_-2px_-2px_#808080,inset_2px_2px_#fff]">
      <header className="flex h-[18px] items-center gap-[3px] bg-linear-to-r from-[#808080] to-[#c0c0c0] pl-px font-bold text-[#d4d0c8]">
        <Icon n="node" />
        <h2 className="pt-[2px]">01</h2>
      </header>
      <div className="bg-linear-to-r from-[#d4d0c8] to-[#f2f1ef]">
        <Menu className="h-[25px] gap-[15px] pl-[11px]" items={['Model', 'Edit', 'Insert', 'View', 'Windows', 'Help']} />
        <div className={`ml-[3px] flex h-6 w-[463px] items-center rounded-sm pl-px ${barFill}`}>
          <Items list="floppy printer | cut copy paste del | undo redo | addData | overview fullExt shrink grow | zoomIn pan | pointer connect | check run" />
        </div>
      </div>
      <div className="mt-px flex min-h-0 flex-1 flex-col border border-black bg-[#d4d0c8]">
        <div className="flex min-h-0 flex-1">
          <div className="flex-1 overflow-hidden bg-white"><Diagram /></div>
          <div className={`flex w-4 flex-col ${track}`}>
            <ScrollBtn dir="up" />
            <div className={`flex-1 ${raised}`} />
            <ScrollBtn dir="down" />
          </div>
        </div>
        <div className="flex h-4">
          <div className={`flex flex-1 ${track}`}>
            <ScrollBtn dir="left" />
            <div className={`w-[547px] ${raised}`} />
            <span className="flex-1" />
            <ScrollBtn dir="right" />
          </div>
          <svg viewBox="0 0 16 16" className="size-4" aria-hidden="true">
            <path d="M4 16L16 4M8 16l8-8M12 16l4-4" stroke="#808080" strokeWidth="1.500" />
          </svg>
        </div>
      </div>
    </section>
  );
}

const models = ['01', '02', '03', '04', '05', '06', '07', '08', '09', '10', 'DU_ADDField_4', 'LU_Prop', 'Model'];
const Minus = () => (
  <button aria-label="Collapse" className="flex size-[9px] items-center justify-center border border-[#808080] bg-white">
    <span className="h-px w-[5px] bg-black" />
  </button>
);
const CatSep = () => <span className="mx-[7px] h-5 w-[2px] shrink-0 border-r border-white bg-[#808080]" />;
const CatBtn = ({ n }) => (
  <button aria-label={n} className="flex w-[22px] shrink-0 items-center justify-center"><Icon n={n} /></button>
);

function Catalog() {
  return (
    <section className="absolute top-[183px] left-[666px] flex h-[340px] w-[685px] flex-col bg-[#d4d0c8] px-[3px] pt-[5px] pb-[7px] shadow-[inset_-1px_-1px_#000,inset_1px_1px_#d4d0c8,inset_-2px_-2px_#808080,inset_2px_2px_#fff]">
      <header className="flex h-[17px] items-center gap-2 bg-linear-to-r from-[#0a246a] to-[#a6caf0] pr-[5px] pl-[3px] text-white">
        <h2 className="flex-1 pt-px">Catalog</h2>
        <button aria-label="Maximize" className="h-[9px] w-[9px] border border-t-2 border-white" />
        <button aria-label="Close">
          <svg viewBox="0 0 8 8" className="size-2"><path d="M0 0l8 8M8 0L0 8" stroke="#fff" strokeWidth="1.500" /></svg>
        </button>
      </header>
      <div className="mt-[2px] flex h-[26px] items-center border-y border-[#808080] shadow-[inset_0_1px_#fff,0_1px_#fff]">
        <CatBtn n="cback" />
        <span className="flex w-[14px] justify-center"><Caret /></span>
        <CatBtn n="cfwd" />
        <span className="w-[2px]" />
        <CatBtn n="cup" />
        <CatBtn n="chome" />
        <CatBtn n="cdb" />
        <span className="-ml-[2px] flex items-center"><CatSep /></span>
        <span className="-ml-1 flex items-center"><CatBtn n="cgrid" /></span>
        <span className="-mr-1 flex w-[14px] justify-center"><Caret c="#808080" /></span>
        <CatSep />
        <span className="-mx-1 flex"><CatBtn n="cfolder" /></span>
        <CatSep />
        <span className="-mx-1 flex"><CatBtn n="ctree" /></span>
        <CatSep />
        <span className="-mx-1 flex"><CatBtn n="list" /></span>
      </div>
      <div className="flex h-[24px] items-center pr-[3px]">
        <span className="w-[54px] pt-px pl-[2px]">Location:</span>
        <Combo label="Location" value="DU_ADDField_4" icon="node" className="min-w-0 flex-1 shrink" />
      </div>
      <div className={`mr-[3px] flex min-h-0 flex-1 bg-white p-[2px] ${sunken}`}>
        <ul className="flex-1 overflow-hidden">
          <li className="flex h-[17px] items-center gap-[6px] pl-[102px]">
            <Minus />
            <span className="flex items-center gap-1"><Icon n="toolbox" /><span className="pt-[2px] leading-[13px]">model</span></span>
          </li>
          <li className="flex h-[17px] items-center gap-[6px] pl-[121px]">
            <Minus />
            <span className="flex items-center gap-1"><Icon n="toolset" /><span className="pt-[2px] leading-[13px]">modelling</span></span>
          </li>
          {models.map((m) => (
            <li key={m} className="flex h-[17px] items-center gap-[3px] pl-[155px]">
              <Icon n={m === 'Model' ? 'badModel' : 'node'} />
              <span
                className={`px-px pt-[2px] leading-[13px] ${m === 'DU_ADDField_4' ? 'bg-[#0a246a] text-white outline-1 outline-dotted outline-black' : ''}`}
              >
                {m}
              </span>
            </li>
          ))}
        </ul>
        <div className={`flex w-4 flex-col ${track}`}>
          <ScrollBtn dir="up" />
          <span className="h-[105px]" />
          <div className={`h-[26px] ${raised}`} />
          <span className="flex-1" />
          <ScrollBtn dir="down" />
        </div>
      </div>
    </section>
  );
}

export default function App() {
  return (
    <div className="relative flex h-screen min-h-[700px] flex-col overflow-hidden bg-black pr-[22px] pl-[25px] font-['DejaVu_Sans_Condensed','DejaVu_Sans',sans-serif] text-[11px] leading-[14px] text-black">
      <div className="flex min-h-0 flex-1 flex-col bg-linear-to-r from-[#d4d0c8] to-[#f5f4f2]">
        <header className="flex h-[9px] items-end gap-[3px] overflow-hidden border-b border-[#d4d0c8] bg-linear-to-r from-[#0a246a] to-[#a6caf0] pr-[2px] pl-[2px]">
          <Icon n="arcmap" />
          <h1 className="flex-1 font-bold text-white">Untitled - ArcMap</h1>
          <div className="flex items-end gap-px pb-[2px]">
            <button aria-label="Minimize" className={`flex h-[14px] w-[15px] items-end justify-center pb-[3px] ${raised}`}><span className="h-[2px] w-[6px] bg-black" /></button>
            <button aria-label="Restore" className={`flex h-[14px] w-[15px] items-end justify-center pb-[3px] ${raised}`}><span className="size-2 border border-t-2 border-black" /></button>
            <button aria-label="Close" className={`ml-[2px] flex h-[14px] w-[15px] items-end justify-center pb-[3px] ${raised}`}>
              <svg viewBox="0 0 8 8" className="size-2"><path d="M0 0l8 8M8 0L0 8" stroke="#000" strokeWidth="1.500" /></svg>
            </button>
          </div>
        </header>
        <Menu
          className="h-[24px] shrink-0 gap-[14px] pl-[11px]"
          items={['File', 'Edit', 'View', 'Bookmarks', 'Insert', 'Selection', 'Geoprocessing', 'Customize', 'Windows', 'Help']}
        />
        <Toolbars />
        <div className="flex min-h-0 flex-1">
          <Contents />
          <MapView />
        </div>
        <footer className="flex h-[21px] shrink-0 items-stretch gap-[2px] bg-[#d4d0c8] pt-[3px]">
          <span className="flex-1" />
          <span className="w-[128px] border border-[#dedbd5]" />
          <span className="w-[18px] border border-[#dedbd5]" />
          <span className="w-[232px] border border-[#dedbd5] pt-px pl-px leading-4 whitespace-pre">817.01  340.206 Unknown Units</span>
        </footer>
      </div>
      <ModelWindow />
      <Catalog />
    </div>
  );
}
